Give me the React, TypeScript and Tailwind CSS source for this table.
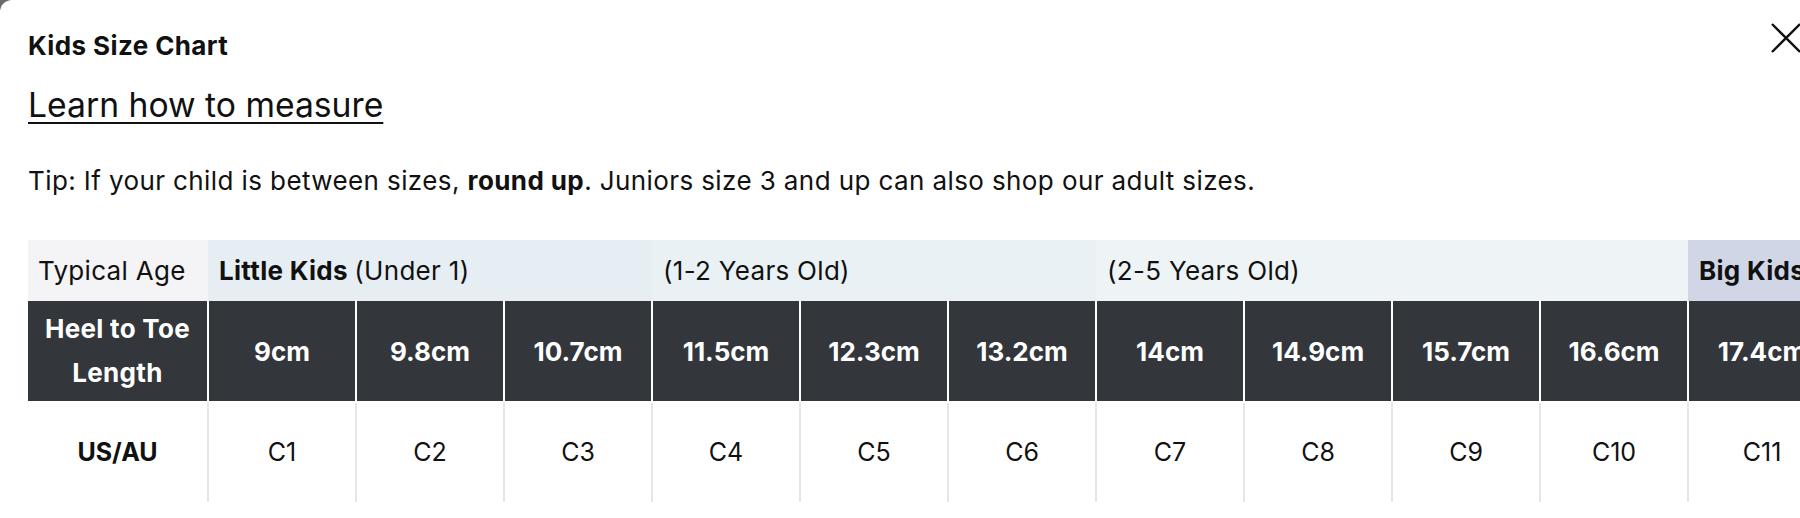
import React from "react";

const ageGroups = [
  { label: "Little Kids", note: "(Under 1)", span: 3, bg: "bg-[#e6eef4]" },
  { label: "", note: "(1-2 Years Old)", span: 3, bg: "bg-[#e9f1f4]" },
  { label: "", note: "(2-5 Years Old)", span: 4, bg: "bg-[#eef4f5]" },
  { label: "Big Kids", note: "(5+ Years Old)", span: 3, bg: "bg-[#d0d6e6]" },
];

const lengths = [
  "9cm", "9.8cm", "10.7cm", "11.5cm", "12.3cm", "13.2cm", "14cm",
  "14.9cm", "15.7cm", "16.6cm", "17.4cm", "18.3cm", "19.1cm",
];

const sizes = ["C1", "C2", "C3", "C4", "C5", "C6", "C7", "C8", "C9", "C10", "C11", "C12", "C13"];

function CloseIcon() {
  return (
    <svg width="32" height="32" viewBox="0 0 32 32" fill="none" stroke="#111" strokeWidth="2.4">
      <path d="M2 2 L30 30 M30 2 L2 30" />
    </svg>
  );
}

export default function App() {
  return (
    <div className="h-[518px] w-[1800px] overflow-hidden bg-[#6b6b6b] font-['Inter',sans-serif] text-[#111]">
      <div className="relative h-full w-full rounded-tl-[12px] bg-white pl-[28px] pt-[31px]">
        <button className="absolute right-[-2px] top-[22px]" aria-label="Close">
          <CloseIcon />
        </button>

        <h2 className="text-[26px] font-bold leading-[30px] tracking-[0.4px]">Kids Size Chart</h2>
        <a href="#" className="mt-[24px] block w-max text-[33.7px] leading-[40px] underline decoration-[2px] underline-offset-[5px]">
          Learn how to measure
        </a>
        <p className="mt-[41px] text-[26px] leading-[30px] tracking-[0.4px]">
          Tip: If your child is between sizes, <b>round up</b>. Juniors size 3 and up can also shop our adult sizes.
        </p>

        <table className="mt-[44px] w-[2104px] min-w-[2104px] table-fixed border-collapse text-[26px] tracking-[0.3px]">
          <colgroup>
            <col className="w-[180px]" />
            {sizes.map((s) => (
              <col key={s} className="w-[148px]" />
            ))}
          </colgroup>
          <tbody>
            <tr className="h-[61px]">
              <td className="bg-[#f4f3f6] px-[10px] whitespace-nowrap">Typical Age</td>
              {ageGroups.map((g, i) => (
                <td key={i} colSpan={g.span} className={`${g.bg} px-[11px] whitespace-nowrap`}>
                  {g.label && <b>{g.label} </b>}
                  {g.note}
                </td>
              ))}
            </tr>
            <tr className="h-[101px] bg-[#33373b] text-white font-bold">
              <td className="border-r-2 border-white text-center leading-[44px]">
                Heel to Toe
                <br />
                Length
              </td>
              {lengths.map((l) => (
                <td key={l} className="border-r-2 border-white text-center whitespace-nowrap tracking-[0px]">
                  {l}
                </td>
              ))}
            </tr>
            <tr className="h-[100px] border-t-2 border-white text-[25px] tracking-[0px]">
              <td className="border-r-2 border-[#e6e6e6] text-center font-bold">US/AU</td>
              {sizes.map((s) => (
                <td key={s} className="border-r-2 border-[#e6e6e6] text-center">
                  {s}
                </td>
              ))}
            </tr>
          </tbody>
        </table>
      </div>
    </div>
  );
}
